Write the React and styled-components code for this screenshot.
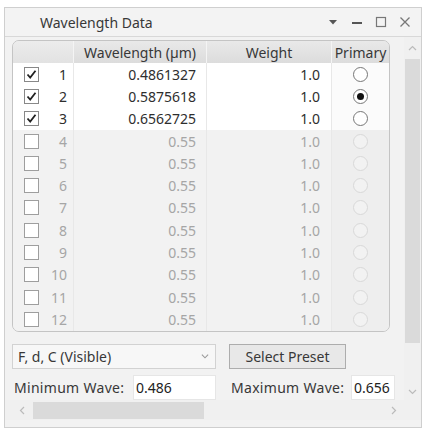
import React from "react";
import styled, { createGlobalStyle } from "styled-components";

const Global = createGlobalStyle`
  html, body { margin: 0; padding: 0; background: #ffffff; }
  body { font-family: "Noto Sans", "Open Sans", sans-serif; }
  * { box-sizing: border-box; }
`;

const Page = styled.div`
  width: 432px;
  height: 435px;
  padding: 7px 10px 7px 4px;
  background: #ffffff;
`;

const Window = styled.div`
  width: 418px;
  height: 421px;
  border: 1px solid #cfcfcf;
  background: #f2f2f2;
  display: flex;
  flex-direction: column;
`;

const TitleBar = styled.div`
  height: 29px;
  flex: none;
  display: flex;
  align-items: center;
  padding: 0 9px 0 35px;
  border-bottom: 1px solid #d8d8d8;
  background: #f3f3f3;
  font-size: 14px;
  color: #383838;
`;

const Title = styled.div`
  flex: 1;
`;

const TitleIcons = styled.div`
  display: flex;
  align-items: center;
  gap: 10px;
  color: #666;
`;

const Body = styled.div`
  flex: 1;
  display: grid;
  grid-template-columns: 1fr 17px;
  grid-template-rows: 1fr 20px;
  padding: 0 6px 7px 0;
  min-height: 0;
`;

const Content = styled.div`
  padding: 3px 9px 0 7px;
  display: flex;
  flex-direction: column;
`;

const Table = styled.div`
  width: 378px;
  border: 1px solid #c4c4c4;
  border-radius: 7px;
  overflow: hidden;
  background: #f1f1f1;
`;

const cols = "60px 133px 125px 1fr";

const HeaderRow = styled.div`
  display: grid;
  grid-template-columns: ${cols};
  height: 22px;
  font-size: 14px;
  color: #383838;
`;

const HeadCell = styled.div`
  display: flex;
  align-items: center;
  justify-content: center;
  background: ${(p) => (p.$blank ? "linear-gradient(#ececec, #e2e2e2)" : "linear-gradient(#e9e9e9, #dcdcdc)")};
  border-left: ${(p) => (p.$first ? "none" : "1px solid #f4f4f4")};
`;

const Row = styled.div`
  display: grid;
  grid-template-columns: ${cols};
  height: 22.3px;
  font-size: 14px;
  color: ${(p) => (p.$on ? "#2e2e2e" : "#a6a6a6")};
  background: ${(p) => (p.$on ? "#ffffff" : "#f2f2f2")};
`;

const Cell = styled.div`
  display: flex;
  align-items: center;
  justify-content: ${(p) => p.$align || "flex-end"};
  padding-right: ${(p) => p.$pr || 0}px;
  border-left: 1px solid #e8e8e8;
  background: ${(p) => (p.$tint ? "rgba(0,0,0,0.015)" : "transparent")};
`;

const IndexCell = styled.div`
  display: flex;
  align-items: center;
  padding-left: 11px;
`;

const Box = styled.div`
  width: 15px;
  height: 15px;
  border: 1px solid ${(p) => (p.$on ? "#888888" : "#9e9e9e")};
  background: #fff;
  display: flex;
  align-items: center;
  justify-content: center;
  flex: none;
`;

const Idx = styled.span`
  width: 28px;
  text-align: right;
  display: inline-block;
`;

const Radio = styled.div`
  width: 15px;
  height: 15px;
  border-radius: 50%;
  border: 1px solid ${(p) => (p.$on ? "#777" : "#d8d8d8")};
  background: ${(p) => (p.$on ? "#fff" : "#f2f2f2")};
  display: flex;
  align-items: center;
  justify-content: center;
`;

const Dot = styled.div`
  width: 7px;
  height: 7px;
  border-radius: 50%;
  background: #111;
`;

const Controls = styled.div`
  display: grid;
  grid-template-columns: 204px 1fr;
  column-gap: 13px;
  margin-top: 12px;
  row-gap: 6px;
  font-size: 14px;
  color: #383838;
`;

const Combo = styled.div`
  height: 25px;
  border: 1px solid #d2d2d2;
  background: #f7f7f7;
  display: flex;
  align-items: center;
  justify-content: space-between;
  padding: 0 6px 0 5px;
`;

const Button = styled.div`
  width: 117px;
  height: 25px;
  border: 1px solid #adadad;
  background: #e8e8e8;
  display: flex;
  align-items: center;
  justify-content: center;
`;

const Field = styled.div`
  display: flex;
  align-items: center;
  white-space: nowrap;
  padding-left: 2px;
`;

const Label = styled.span`
  width: ${(p) => p.$w}px;
  flex: none;
  letter-spacing: 0.3px;
`;

const Input = styled.div`
  width: ${(p) => p.$w}px;
  flex: none;
  height: 25px;
  background: #fff;
  border: 1px solid #e6e6e6;
  padding: 0 2px;
  display: flex;
  align-items: center;
  overflow: hidden;
  color: #222;
`;

const VScroll = styled.div`
  display: flex;
  flex-direction: column;
  align-items: stretch;
  background: #f0f0f0;
`;

const ArrowBox = styled.div`
  height: ${(p) => p.$h || 20}px;
  width: ${(p) => p.$w || "auto"};
  display: flex;
  align-items: center;
  justify-content: center;
  flex: none;
`;

const VThumb = styled.div`
  height: 284px;
  margin: 0 1px;
  background: #dadada;
  flex: none;
`;

const Spacer = styled.div`
  flex: 1;
`;

const HScroll = styled.div`
  display: flex;
  align-items: center;
  background: #f0f0f0;
  padding-left: 6px;
`;

const HThumb = styled.div`
  width: 171px;
  height: 17px;
  background: #dadada;
  flex: none;
`;

const Corner = styled.div`
  background: #f0f0f0;
`;

const Chevron = ({ dir, color = "#bbb", size = 9 }) => {
  const paths = {
    up: "M1 6 L4.5 2.5 L8 6",
    down: "M1 3 L4.5 6.5 L8 3",
    left: "M6 1 L2.5 4.5 L6 8",
    right: "M3 1 L6.5 4.5 L3 8",
  };
  return (
    <svg width={size} height={size} viewBox="0 0 9 9">
      <path d={paths[dir]} fill="none" stroke={color} strokeWidth="1.2" />
    </svg>
  );
};

const Check = () => (
  <svg width="13" height="13" viewBox="0 0 13 13">
    <path d="M2.5 6.5 L5.2 9.5 L10.5 2.8" fill="none" stroke="#222" strokeWidth="1.8" />
  </svg>
);

const rows = [
  { n: 1, w: "0.4861327", on: true, primary: false },
  { n: 2, w: "0.5875618", on: true, primary: true },
  { n: 3, w: "0.6562725", on: true, primary: false },
  ...Array.from({ length: 9 }, (_, i) => ({ n: i + 4, w: "0.55", on: false, primary: false })),
];

export default function App() {
  return (
    <>
      <Global />
      <Page>
        <Window>
          <TitleBar>
            <Title>Wavelength Data</Title>
            <TitleIcons>
              <svg width="14" height="12" viewBox="0 0 14 12">
                <path d="M3 4 L11 4 L7 8.5 Z" fill="#555" />
              </svg>
              <svg width="14" height="12" viewBox="0 0 14 12">
                <rect x="2" y="6" width="10" height="2" fill="#555" />
              </svg>
              <svg width="14" height="12" viewBox="0 0 14 12">
                <rect x="2.5" y="1.5" width="9" height="9" fill="none" stroke="#777" strokeWidth="1.2" />
              </svg>
              <svg width="14" height="12" viewBox="0 0 14 12">
                <path d="M2.5 1.5 L11.5 10.5 M11.5 1.5 L2.5 10.5" stroke="#777" strokeWidth="1.3" />
              </svg>
            </TitleIcons>
          </TitleBar>
          <Body>
            <Content>
              <Table>
                <HeaderRow>
                  <HeadCell $blank $first />
                  <HeadCell>Wavelength (µm)</HeadCell>
                  <HeadCell>Weight</HeadCell>
                  <HeadCell>Primary</HeadCell>
                </HeaderRow>
                {rows.map((r) => (
                  <Row key={r.n} $on={r.on}>
                    <IndexCell>
                      <Box $on={r.on}>{r.on && <Check />}</Box>
                      <Idx>{r.n}</Idx>
                    </IndexCell>
                    <Cell $pr={10}>{r.w}</Cell>
                    <Cell $pr={11}>1.0</Cell>
                    <Cell $align="center" $tint>
                      <Radio $on={r.on}>{r.primary && <Dot />}</Radio>
                    </Cell>
                  </Row>
                ))}
              </Table>
              <Controls>
                <Combo>
                  <span>F, d, C (Visible)</span>
                  <Chevron dir="down" color="#999" size={8} />
                </Combo>
                <Button>Select Preset</Button>
                <Field>
                  <Label $w={119}>Minimum Wave:</Label>
                  <Input $w={83}>0.486</Input>
                </Field>
                <Field>
                  <Label $w={120}>Maximum Wave:</Label>
                  <Input $w={44}>0.656</Input>
                </Field>
              </Controls>
            </Content>
            <VScroll>
              <ArrowBox $h={22}>
                <Chevron dir="up" />
              </ArrowBox>
              <VThumb />
              <Spacer />
              <ArrowBox $h={18}>
                <Chevron dir="down" />
              </ArrowBox>
            </VScroll>
            <HScroll>
              <ArrowBox $w="22px">
                <Chevron dir="left" />
              </ArrowBox>
              <HThumb />
              <Spacer />
              <ArrowBox $w="22px">
                <Chevron dir="right" />
              </ArrowBox>
            </HScroll>
            <Corner />
          </Body>
        </Window>
      </Page>
    </>
  );
}
